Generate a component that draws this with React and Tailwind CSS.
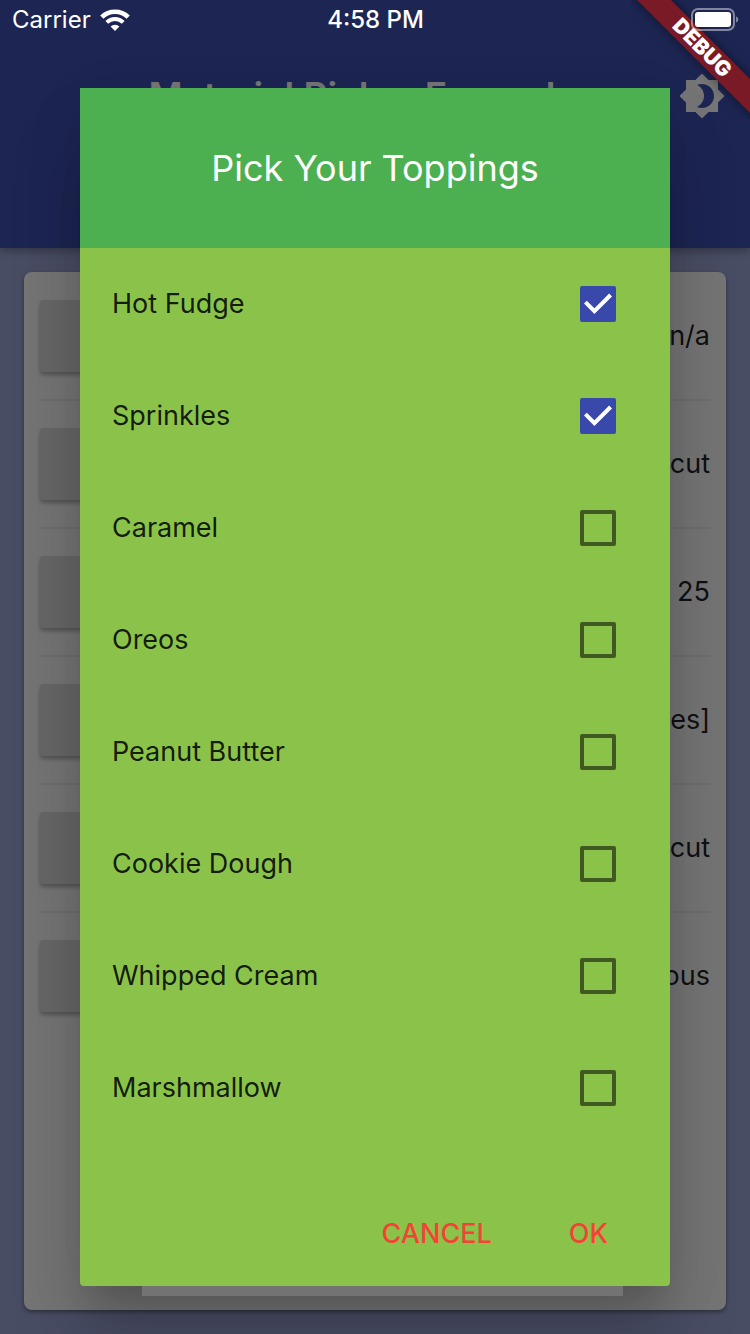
import { useState } from "react";

const TOPPINGS = [
  "Hot Fudge",
  "Sprinkles",
  "Caramel",
  "Oreos",
  "Peanut Butter",
  "Cookie Dough",
  "Whipped Cream",
  "Marshmallow",
];

const SETTINGS = [
  { id: "empty", value: "n/a" },
  { id: "state", value: "Connecticut" },
  { id: "number", value: "25" },
  { id: "toppings", value: "[Hot Fudge, Sprinkles]" },
  { id: "region", value: "Connecticut" },
  { id: "mood", value: "Various" },
];

function WifiIcon() {
  return (
    <svg className="h-6 w-8" viewBox="0 0 32 24" fill="none" stroke="white" aria-hidden="true">
      <path d="M2.8 9.1a19 19 0 0 1 26.4 0" strokeWidth="4.6" />
      <path d="M7.8 14.4a11.8 11.8 0 0 1 16.4 0" strokeWidth="4" />
      <path d="M11.6 18.6a6.4 6.4 0 0 1 8.8 0L16 23z" fill="white" stroke="none" />
    </svg>
  );
}

function BatteryIcon() {
  return (
    <svg className="h-6 w-12" viewBox="0 0 48 24" aria-hidden="true">
      <rect x="1" y="1" width="42" height="21" rx="6" fill="none" stroke="white" strokeOpacity="0.45" strokeWidth="2" />
      <rect x="4" y="4" width="36" height="15" rx="3" fill="white" />
      <path d="M45 8.5c3 .8 3 5.2 0 6z" fill="white" fillOpacity="0.45" />
    </svg>
  );
}

function BrightnessIcon() {
  return (
    <svg className="h-12 w-12" viewBox="0 0 24 24" fill="currentColor" aria-hidden="true">
      <path d="M20 8.69V4h-4.69L12 .69 8.69 4H4v4.69L.69 12 4 15.31V20h4.69L12 23.31 15.31 20H20v-4.69L23.31 12 20 8.69zM12 18c-.89 0-1.74-.2-2.5-.55C11.56 16.5 13 14.42 13 12s-1.44-4.5-3.5-5.45C10.26 6.2 11.11 6 12 6c3.31 0 6 2.69 6 6s-2.69 6-6 6z" />
    </svg>
  );
}

function StatusBar() {
  return (
    <div className="absolute inset-x-0 top-0 z-30 grid h-10 grid-cols-3 items-center pl-3 pr-[11px] text-[24px] text-white">
      <div className="flex items-center gap-2">
        <span>Carrier</span>
        <WifiIcon />
      </div>
      <span className="text-center font-medium">4:58 PM</span>
      <div className="flex justify-end">
        <BatteryIcon />
      </div>
    </div>
  );
}

function DebugRibbon() {
  return (
    <div className="pointer-events-none absolute right-0 top-0 z-20 h-[120px] w-[120px] overflow-hidden">
      <div className="absolute -right-[52px] top-9 flex h-6 w-[200px] rotate-45 items-center justify-center bg-[#7a1a26] text-[21px] font-black text-white shadow-[0_0_12px_rgba(0,0,0,0.5)]">
        DEBUG
      </div>
    </div>
  );
}

function ToppingRow({ name, checked, onToggle }) {
  return (
    <li>
      <label className="flex h-28 items-center justify-between pl-8 pr-[54px] text-[27px] text-black/87">
        {name}
        <span className="grid h-9 w-9">
          <input
            type="checkbox"
            checked={checked}
            onChange={onToggle}
            className="peer col-start-1 row-start-1 h-9 w-9 appearance-none rounded-[2px] border-4 border-black/54 checked:border-0 checked:bg-[#3949ab]"
          />
          <svg
            className="pointer-events-none invisible col-start-1 row-start-1 h-9 w-9 peer-checked:visible"
            viewBox="0 0 36 36"
            fill="none"
            stroke="white"
            strokeWidth="4"
            aria-hidden="true"
          >
            <path d="M5.4 16.2 14.4 25.2 30.6 9" />
          </svg>
        </span>
      </label>
    </li>
  );
}

export default function App() {
  const [picked, setPicked] = useState(["Hot Fudge", "Sprinkles"]);
  const toggle = (name) =>
    setPicked((list) => (list.includes(name) ? list.filter((n) => n !== name) : [...list, name]));

  return (
    <div className="relative grid min-h-screen overflow-hidden bg-[#9fa8da] font-['Inter','Noto_Sans',sans-serif]">
      <div className="col-start-1 row-start-1 flex min-w-0 flex-col">
        <header className="relative h-[248px] bg-[#3f51b5] pt-10 text-white shadow-[0_3px_8px_rgba(0,0,0,0.3)]">
          <div className="flex h-28 items-center pl-12 pr-6">
            <h1 className="flex-1 text-center text-[37px] font-semibold">Material Picker Example</h1>
            <button type="button" aria-label="Toggle brightness">
              <BrightnessIcon />
            </button>
          </div>
        </header>
        <main className="flex flex-1 p-6">
          <ul className="flex-1 rounded-lg bg-white px-4 pt-px shadow-[0_2px_4px_rgba(0,0,0,0.4)]">
            {SETTINGS.map((row) => (
              <li
                key={row.id}
                className="flex h-32 items-center justify-between border-b-2 border-black/6 text-[27px] text-black/87 last:border-transparent"
              >
                <button
                  type="button"
                  aria-label={row.id}
                  className="h-[72px] w-[200px] rounded bg-[#e0e0e0] shadow-[0_3px_4px_rgba(0,0,0,0.3)]"
                />
                <span>{row.value}</span>
              </li>
            ))}
          </ul>
        </main>
      </div>

      <div className="relative z-10 col-start-1 row-start-1 flex bg-black/54 px-20 pb-12 pt-[88px]">
        <section
          role="dialog"
          aria-modal="true"
          aria-labelledby="dialog-title"
          className="relative flex min-w-0 flex-1 flex-col rounded bg-[#8bc34a] shadow-[0_22px_30px_-14px_rgba(0,0,0,0.12),0_52px_70px_0px_rgba(0,0,0,0.18),0_18px_70px_0px_rgba(0,0,0,0.06)]"
        >
          <div className="absolute left-[62px] right-[47px] top-full h-[10px] bg-[#737373]" />
          <div className="flex h-40 items-center justify-center bg-[#4caf50]">
            <h2 id="dialog-title" className="text-[36px] text-white">
              Pick Your Toppings
            </h2>
          </div>
          <ul className="flex-1">
            {TOPPINGS.map((name) => (
              <ToppingRow key={name} name={name} checked={picked.includes(name)} onToggle={() => toggle(name)} />
            ))}
          </ul>
          <div className="flex h-[104px] items-center justify-end gap-[45px] pr-[46px] text-[27px] font-medium text-[#f44336]">
            <button type="button" className="px-4">
              CANCEL
            </button>
            <button type="button" className="px-4">
              OK
            </button>
          </div>
        </section>
      </div>

      <DebugRibbon />
      <StatusBar />
    </div>
  );
}
